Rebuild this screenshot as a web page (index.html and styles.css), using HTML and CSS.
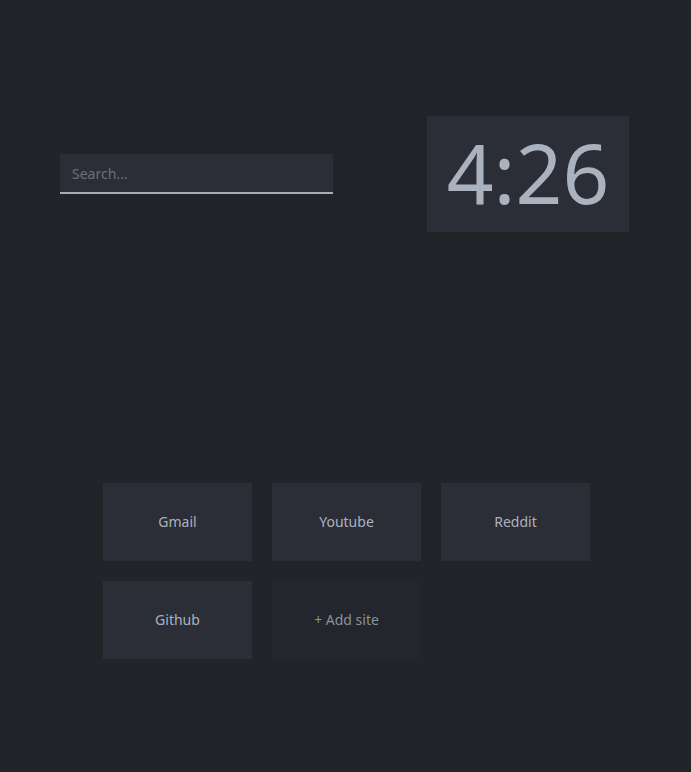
FILE: index.html
```html
<!DOCTYPE html>
<html lang="en">
<head>
<meta charset="utf-8">
<title>Start</title>
<link rel="stylesheet" href="styles.css">
</head>
<body>
<main class="page">
  <section class="top">
    <div class="search-wrap">
      <input class="search" type="text" placeholder="Search...">
    </div>
    <div class="clock">4:26</div>
  </section>
  <section class="sites">
    <a class="tile" href="#">Gmail</a>
    <a class="tile" href="#">Youtube</a>
    <a class="tile" href="#">Reddit</a>
    <a class="tile" href="#">Github</a>
    <a class="tile tile-add" href="#">+ Add site</a>
  </section>
</main>
</body>
</html>
```
FILE: styles.css
```css
* { box-sizing: border-box; }
html, body {
  margin: 0;
  height: 100%;
  background: #212428;
  font-family: "Noto Sans", "Open Sans", sans-serif;
  color: #abb2bf;
}
.page {
  display: flex;
  flex-direction: column;
}
.top {
  display: flex;
  justify-content: space-between;
  align-items: center;
  padding: 116px 62px 0 60px;
}
.search {
  display: block;
  width: 273px;
  height: 40px;
  border: none;
  border-bottom: 2px solid #a6adba;
  background: #2b2e37;
  color: #abb2bf;
  font-family: inherit;
  font-size: 14px;
  padding: 0 12px;
  outline: none;
}
.search::placeholder { color: #6b707b; }
.clock {
  width: 202px;
  height: 116px;
  background: #2b2e37;
  display: flex;
  align-items: center;
  justify-content: center;
  font-size: 82px;
  font-weight: 400;
  line-height: 1;
  color: #abb2bf;
  padding-bottom: 4px;
}
.sites {
  display: grid;
  grid-template-columns: repeat(3, 149px);
  grid-auto-rows: 78px;
  gap: 20px;
  justify-content: center;
  margin-top: 251px;
  padding-left: 2px;
}
.tile {
  display: flex;
  align-items: center;
  justify-content: center;
  background: #2b2e37;
  color: #abb2bf;
  text-decoration: none;
  font-size: 14px;
  padding-bottom: 1px;
}
.tile-add {
  background: #23262c;
  color: #8b909a;
}
```
